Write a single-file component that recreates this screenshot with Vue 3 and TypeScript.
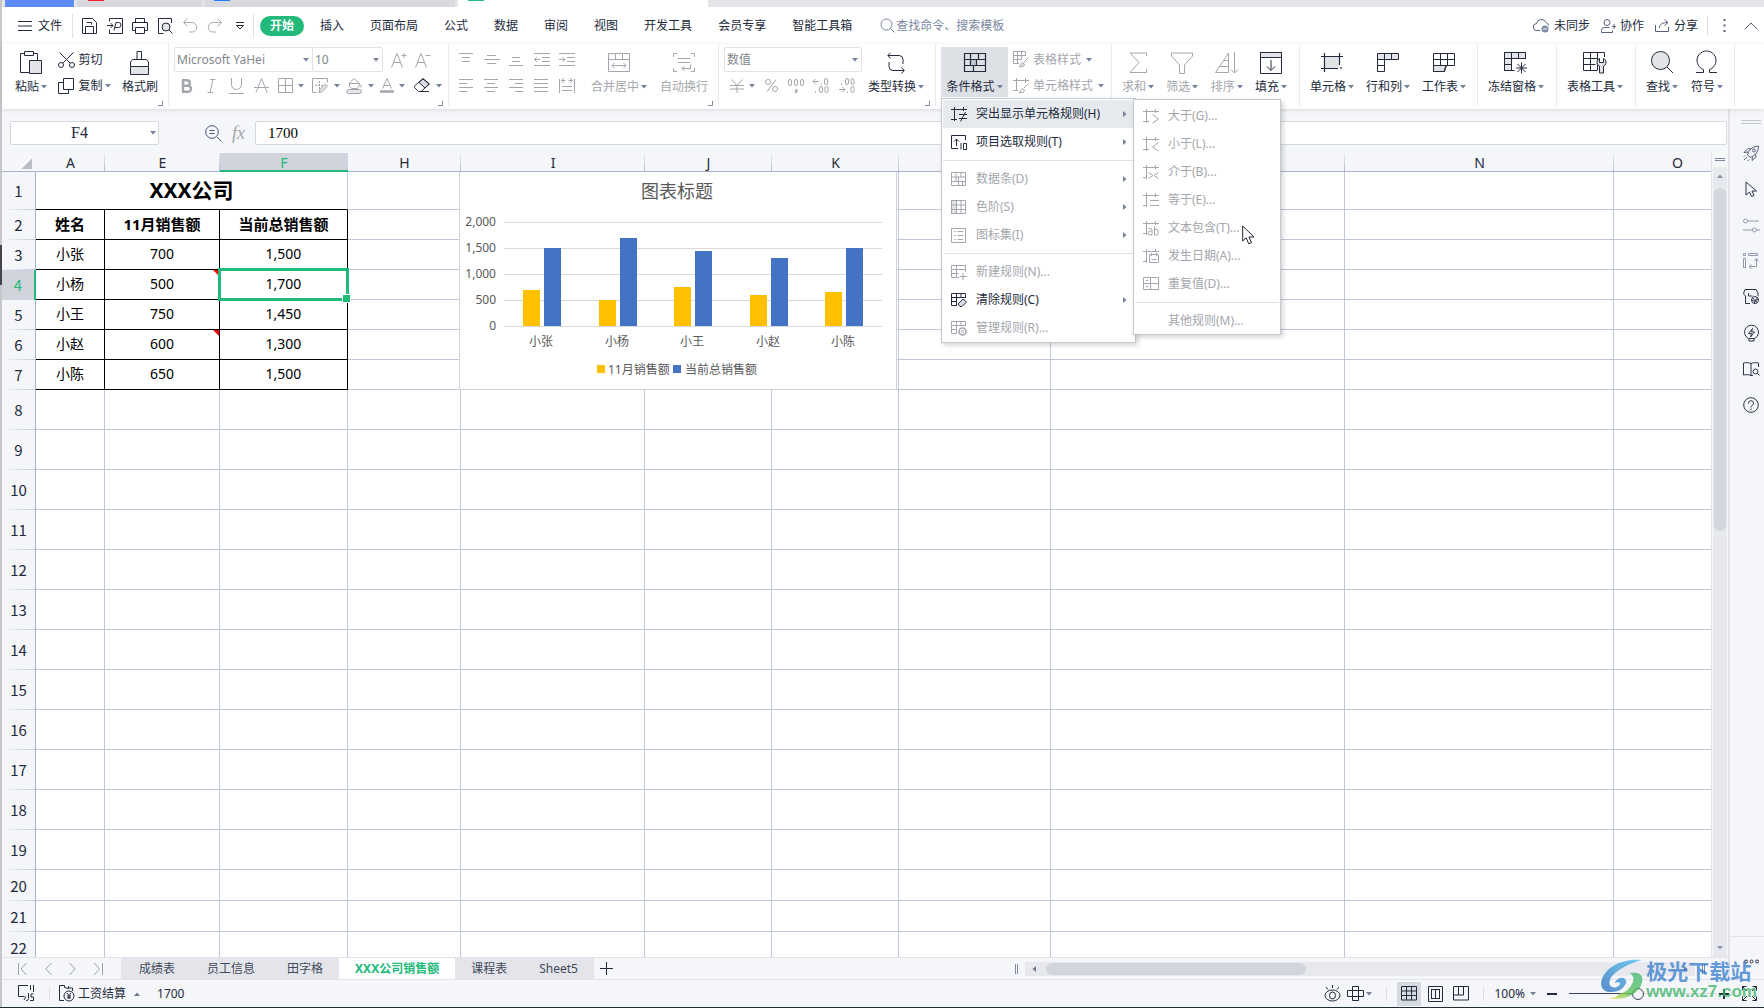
<script setup lang="ts">
import { h, ref } from 'vue'

type Glyph = [number, number, string]

const soft = 'fill="#e2e4e8"'

const glyphs: Record<string, Glyph> = {
  menu: [14, 10, '<path d="M0 .5h14M0 5h14M0 9.5h14"/>'],
  save: [15, 16, '<path d="M.5 .5h10l4 4v11h-14zM3.500 15V8.500h8V15M4.500 4.500h5v2"/>'],
  export: [16, 16, '<path d="M2.500 3.500V.5h13v15h-13v-4M0 7.500h6M3.500 5l2.500 2.500L3.500 10M7 12.500l2-8h2.500a2 2 0 0 1 0 5H8"/>'],
  print: [16, 16, '<path d="M3.500 4V.5h9V4M3.500 12.500h-3v-8h15v8h-3M3.500 9.500h9v6h-9z"/>'],
  preview: [16, 16, '<path d="M14.500 5V.5H1.500v15h5"/><circle cx="9" cy="9" r="4" fill="#dfe2e7"/><path d="M12 12l3.500 3.500"/>'],
  undo: [14, 15, '<path d="M4.500 .5L.5 4.500l4 4M.5 4.500H9a4.500 4.500 0 0 1 0 9.500H6"/>'],
  redo: [14, 15, '<path d="M9.500 .5l4 4-4 4M13.500 4.500H5A4.500 4.500 0 0 0 5 14h3"/>'],
  more: [8, 8, '<path d="M0 .5h8M.5 3.500L4 7l3.500-3.500z"/>'],
  search: [15, 15, '<circle cx="6.500" cy="6.500" r="5.500"/><path d="M10.500 10.500l4 4"/>'],
  cloud: [17, 15, '<path d="M7 12.500H4a3.500 3.500 0 0 1-.5-7 5 5 0 0 1 9.500-1 4 4 0 0 1 2.500 3"/><circle cx="12" cy="11" r="3.500" fill="#7c89a8" stroke="none"/><path d="M10 11h4" stroke="#fff"/>'],
  person: [15, 14, '<circle cx="6" cy="3.500" r="3"/><path d="M8.500 8.500h-5a3 3 0 0 0-3 3v2h11v-2M11 7.500h4M13 5v5"/>'],
  share: [15, 13, '<path d="M.5 6v6.500h13V8M4.500 9c0-4 3-5.500 8-5.500M9.500 .5l3.500 3-3.500 3"/>'],
  dots: [3, 13, '<path d="M1.500 0v2M1.500 5.500v2M1.500 11v2" stroke-width="2"/>'],
  up: [14, 8, '<path d="M.5 7.500L7 1l6.500 6.500"/>'],
  paste: [22, 24, `<path d="M9 21.500H.5v-19h4M13.500 2.500h4V9M4.500 .5h9v4h-9z"/><path d="M9.500 9.500h12v13h-12z" ${soft}/>`],
  cut: [17, 16, '<circle cx="3" cy="13" r="2.500"/><circle cx="14" cy="13" r="2.500"/><path d="M1.500 .5L12 11M15.500 .5L5 11"/>'],
  copy: [16, 16, '<path d="M5.500 4.500h-5v11h10v-4M5.500 .5h10v11h-10z"/>'],
  brush: [19, 24, `<path d="M7 8.500V.5h4.500v8M.5 15v-4l2-2.500h14l2 2.500v4"/><path d="M.5 15.500h18v8H.5z" ${soft}/>`],
  grow: [16, 16, '<path d="M.5 15.500L6 1.500l5.500 14M2.500 10.500h7M10.500 3.500h5M13 1v5"/>'],
  shrink: [16, 16, '<path d="M.5 15.500L6 1.500l5.500 14M2.500 10.500h7M10.500 3.500h5"/>'],
  bold: [12, 14, '<path d="M2 1v12M1 1.200h5a2.800 2.800 0 0 1 0 5.600H2M5.500 6.800H7a3 3 0 0 1 0 6H1" stroke-width="2.400"/>'],
  italic: [9, 14, '<path d="M3 .5h5.500M.5 13.500H6M5.800 .5l-2.600 13"/>'],
  underline: [15, 16, '<path d="M2.500 0v6.500a5 5 0 0 0 10 0V0M0 15.500h15"/>'],
  strike: [15, 15, '<path d="M2 14.500L7.500 .5l5.500 14M0 9.500h15"/>'],
  borders: [15, 15, '<path d="M.5 .5h14v14H.5zM7.500 .5v14M.5 7.500h14"/>'],
  penborder: [17, 16, '<path d="M15.500 4.500V.5H.5v14h4"/><path d="M7.500 3v8M3 7.500h9" stroke-dasharray="2 1"/><path d="M7 14.500l.8-3L13.500 6l2 2L10 13.700z" fill="#e2e4e8"/>'],
  bucket: [17, 16, `<path d="M3.500 5L8 .5l6 5.500-2.500 4.500h-6L3.500 8zM3.500 5.500h10M15 7v2.500"/><rect x=".5" y="11.500" width="15" height="4" rx="2" ${soft}/>`],
  fontcolor: [14, 15, '<path d="M2.500 10.500l4.500-10 4.500 10M4 7.500h6"/><path d="M0 13.500h14" stroke-width="2.500"/>'],
  eraser: [17, 15, '<path d="M.5 8L9 .5 15.500 6 7 13.500H4.500L.5 9.500z"/><path d="M5 4.500L9 1l6 5-4 4z" fill="#d9dce2"/><path d="M7 13.500h8"/>'],
  vtop: [14, 14, '<path d="M0 .5h14M3 4.500h8M3 8.500h8"/>'],
  vmid: [16, 14, '<path d="M3 2.500h9M0 6.500h16M3 10.500h9"/>'],
  vbot: [14, 14, '<path d="M3 4.500h8M3 8.500h8M0 12.500h14"/>'],
  outdent: [16, 14, '<path d="M0 .5h16M8 4.500h8M8 8.500h8M0 12.500h16M0 6.500h6M3 4L.5 6.500 3 9"/>'],
  indent: [16, 14, '<path d="M0 .5h16M8 4.500h8M8 8.500h8M0 12.500h16M0 6.500h6M3.500 4L6 6.500 3.500 9"/>'],
  hleft: [14, 14, '<path d="M0 .5h14M0 4.500h8M0 8.500h14M0 12.500h8"/>'],
  hcenter: [14, 14, '<path d="M0 .5h14M3 4.500h8M0 8.500h14M3 12.500h8"/>'],
  hright: [14, 14, '<path d="M0 .5h14M6 4.500h8M0 8.500h14M6 12.500h8"/>'],
  justify: [14, 14, '<path d="M0 .5h14M0 4.500h14M0 8.500h14M0 12.500h14"/>'],
  distribute: [16, 15, '<path d="M.5 1v14M15.500 1v14M3 8.500h10M3 12.500h10M2.500 2.500h4M2.500 2.500L5 0M2.500 2.500L5 5M13.500 2.500h-4M13.500 2.500L11 0M13.500 2.500L11 5"/>'],
  merge: [22, 20, '<path d="M.5 .5h21v18H.5zM.5 6.500h21M7.500 .5v6M14.500 .5v6M4 12.500h14M6.500 10L4 12.500 6.500 15M15.500 10l2.500 2.500-2.500 2.500"/>'],
  wrap: [22, 20, '<path d="M.5 4V.5H4M18 .5h3.500V4M21.500 15v3.500H18M4 18.500H.5V15M5 5.500h12M5 9.500h12M17.500 11.500v4H9M11.500 13L9 15.500l2.500 2.500"/>'],
  yen: [14, 14, '<path d="M1.500 .5L7 6.500l5.500-6M7 6.500V14M0 6.500h14M0 10h14"/>'],
  percent: [13, 13, '<circle cx="3" cy="3" r="2.500"/><circle cx="10" cy="10" r="2.500"/><path d="M11 .5l-9 12"/>'],
  thousands: [16, 14, '<rect x=".5" y=".5" width="3" height="6" rx="1.500"/><rect x="6.500" y=".5" width="3" height="6" rx="1.500"/><rect x="12.500" y=".5" width="3" height="6" rx="1.500"/><path d="M8.500 10v2l-1 2" stroke-width="2"/>'],
  decinc: [16, 15, '<path d="M0 3.500h6M2.500 1L0 3.500 2.500 6M8.500 5.500v1.500M2.500 13.500V15"/><rect x="11.500" y=".5" width="3" height="6" rx="1.500"/><rect x="6.500" y="8.500" width="3" height="6" rx="1.500"/><rect x="12" y="8.500" width="3" height="6" rx="1.500"/>'],
  decdec: [16, 15, '<path d="M0 11.500h6M3.500 9L6 11.500 3.500 14M8.500 13.500V15M2.500 5.500v1.500"/><rect x="6.500" y=".5" width="3" height="6" rx="1.500"/><rect x="12" y=".5" width="3" height="6" rx="1.500"/><rect x="12" y="8.500" width="3" height="6" rx="1.500"/>'],
  convert: [18, 22, '<path d="M3.500 1L.8 3.500 3.500 6.500M.8 3.500H12a4 4 0 0 1 4 4V12M14.500 15.500l2.700 3-2.700 3M17.200 18.500H6a4 4 0 0 1-4-4V10"/>'],
  condfmt: [22, 20, '<path d="M6.500 6.500h6v6h-6z" fill="#c3c9d2"/><path d="M.5 .5h21v18H.5zM.5 6.500h21M.5 12.500h21M6.500 .5v12M14.500 .5v6M12.500 6.500v6M9.500 12.500v6" stroke-width="1.200"/>'],
  tablestyle: [17, 17, `<path d="M12.500 5V.5H.5v12H6M.5 4.500h12M.5 8.500h8M4.500 .5v12M8.500 .5v8"/><path d="M15.500 6.500L11 11M9 11.500c-1.500 1-.5 3-3 4 3 1 5.500-.5 5.500-2.500z" ${soft}/>`],
  cellstyle: [17, 16, '<path d="M3.500 0v12M0 2.500h16M12.500 0v5M0 12.500h5"/><path d="M15.500 5.500L11 10M9 10.500c-1.500 1-.5 3-3 4 3 1 5.500-.5 5.500-2.500z"/>'],
  sum: [18, 22, '<path d="M17.500 4V1H1l9 9.500L1 20.500h16.500V17"/>'],
  filter: [22, 22, '<path d="M.5 1h21v3L13.500 13v8.500h-5V13L.5 4z"/>'],
  sort: [24, 22, '<path d="M.5 20.500L13.500 1v19.500zM5 14.500h8.500M9 8.500h4.500M19.500 0v21M16 17.500l3.500 3.500 3.500-3.500"/>'],
  fill: [22, 22, `<path d="M.5 .5h21v5H.5z" ${soft}/><path d="M.5 .5h21v21H.5zM11 8v10M7 14.500l4 4 4-4"/>`],
  cells: [22, 20, `<path d="M3.500 3.500h15v12h-15z" ${soft} stroke="none"/><path d="M3.500 0v19M0 3.500h22M18.500 0v12M0 15.500h17M20 14v2" stroke-width="1.200"/>`],
  rowcol: [22, 20, `<path d="M.5 .5h21v6H.5z" ${soft}/><path d="M7.500 .5v18h-7V.5M14.500 .5v6M.5 6.500h7M.5 12.500h7"/>`],
  worksheet: [22, 20, `<path d="M.5 12.500h13l-2 6H.5z" ${soft}/><path d="M.5 18.500V.5h21v12H.5M.5 6.500h21M7.500 .5v12M14.500 .5v12M.5 18.500h10.500l2-6"/>`],
  freeze: [24, 22, `<path d="M.5 .5h21v6h-14v12h-7z" ${soft}/><path d="M21.500 7V.5H.5v18h10M7.500 .5v18M14.500 .5v6M.5 6.500h21M.5 12.500h7M17.500 10.500v11M12 16h11M13.500 12l8 8M21.500 12l-8 8"/>`],
  tabletool: [24, 22, `<path d="M21.500 5V.5H.5v18H14M7.500 .5v18M14.500 .5v18M.5 6.500h14M.5 12.500h12"/><path d="M16.500 6.500v4h4v-4a4 4 0 0 1 0 7.500v7h-4v-7a4 4 0 0 1 0-7.500z" ${soft}/>`],
  find: [23, 23, `<circle cx="9.500" cy="9.500" r="9" ${soft}/><path d="M16 16l6 6"/>`],
  omega: [21, 22, '<path d="M0 20.500h7.500v-3a9.500 9.500 0 1 1 6 0v3H21"/>'],
  corner: [5, 5, '<path d="M4.500 0v4.500H0"/>'],
  caret: [6, 4, '<path d="M0 0h6L3 3.500z" fill="currentColor" stroke="none"/>'],
  caretup: [6, 4, '<path d="M0 4h6L3 .5z" fill="currentColor" stroke="none"/>'],
  caretright: [4, 6, '<path d="M0 0v6l3.500-3z" fill="currentColor" stroke="none"/>'],
  caretleft: [4, 6, '<path d="M4 0v6L.5 3z" fill="currentColor" stroke="none"/>'],
  mnot: [16, 15, '<path d="M3.500 0v14M0 2.500h16M12.500 0v4M0 12.500h6M8 7.500h8M8 11.500h8M14.500 5L9.500 14.500"/>'],
  mtop: [16, 15, '<path d="M14.500 5V.5H.5v13H7M5.500 11V4M3 6.500L5.500 4 8 6.500M10 8v6.500M12.500 8.500h3v6h-3z"/>'],
  mbars: [16, 15, `<path d="M.5 .5h14v13H.5zM.5 5h14M.5 9.500h14M5 .5v9M10 .5v4.500M7.500 5v8.500M11.500 9.500v4"/>`],
  mscale: [16, 15, `<path d="M.5 .5h5v13h-5z" ${soft}/><path d="M.5 .5h14v13H.5zM.5 5h14M.5 9.500h14M5.500 .5v13M10 .5v13"/>`],
  micons: [16, 15, '<path d="M.5 .5h14v14H.5zM6.500 3.500H12M6.500 7.500H12M6.500 11.500H12M3 3.500h1.500M3 7.500h1.500M3 11.500h1.500"/>'],
  mnew: [16, 15, '<path d="M14.500 7V.5H.5v12H8M.5 4.500h14M.5 8.500h7M5.500 .5v12M12 8v7M8.500 11.500H16"/>'],
  mclear: [16, 15, '<path d="M14.500 5V.5H.5v12H6M.5 4.500h14M.5 8.500H6M5.500 .5v12M10 .5v4"/><path d="M7 11l5-5 3.500 3-4.500 4.500H9z" fill="#d9dce2"/>'],
  mmanage: [16, 15, '<path d="M14.500 5V.5H.5v12H6M.5 4.500h14M.5 8.500H6M5.500 .5v12M10 .5v4"/><circle cx="11.500" cy="10.500" r="3.500" stroke-width="1.600"/><circle cx="11.500" cy="10.500" r="1"/>'],
  gt: [16, 15, '<path d="M3.500 0v14M0 2.500h16M12.500 0v4M0 12.500h6M9.500 5.500l6 4.500-6 4"/>'],
  lt: [16, 15, '<path d="M3.500 0v14M0 2.500h16M12.500 0v4M0 12.500h6M15.500 5.500l-6 4.500 6 4"/>'],
  between: [16, 15, '<path d="M3.500 0v14M0 2.500h16M12.500 0v4M0 12.500h4M5.500 7.500l4.500 3-4.500 3M15.500 7.500l-4.500 3 4.500 3"/>'],
  eq: [16, 15, '<path d="M3.500 0v14M0 2.500h16M12.500 0v4M0 12.500h4M7 7.500h9M7 12.500h9"/>'],
  has: [16, 15, '<path d="M3.500 0v14M0 2.500h16M12.500 0v4M0 12.500h4M5.500 7.500h2a1.500 1.500 0 0 1 1.500 1.500v5M9 10H7a2 2 0 0 0 0 4h2M11.500 5v9h2.500a1 1 0 0 0 1-1v-3.500a1 1 0 0 0-1-1h-2.500"/>'],
  date: [16, 15, '<path d="M3.500 0v14M0 2.500h16M12.500 0v3M0 12.500h4M6.500 5.500h9v8h-9zM8.500 4v3M13.500 4v3M8.500 10.500h5"/>'],
  dup: [16, 14, '<path d="M.5 .5h15v12H.5zM.5 6.500h15M7.500 .5v12M3 3.500h2M3 9.500h2"/>'],
  pointer: [13, 20, '<path d="M.7 1v15l3.500-3.200 2.500 6 2.800-1.200-2.600-5.600H12z" fill="#fff"/>'],
  zoomout: [17, 17, '<circle cx="7" cy="7" r="6.300"/><path d="M12 12l4.500 4.500M4.500 5.500h5M4.500 8.500h5"/>'],
  rocket: [17, 17, '<path d="M4.500 10C5.500 5 9 1.500 15.500 1c0 6.500-4 10-8.500 11.500zM5.500 7L1 7.500l4-4 3 .5M9.500 11.500L9 15.500l4-3.500-.5-3M4 12l-3 3M2 10.500l-1 1M6 14.500l-1.500 1.500"/><circle cx="11" cy="5.500" r="1.500"/>'],
  arrow: [13, 17, '<path d="M1 1v13l3.500-3 2 4.500L9 14.500l-2-4.500h4.500z"/>'],
  sliders: [17, 15, '<circle cx="2.500" cy="3" r="2"/><circle cx="11.500" cy="12" r="2"/><path d="M4.500 3H16M0 12h9.500M13.500 12H17"/>'],
  layout: [16, 16, '<path d="M.5 .5h2v2h-2zM5.500 .5h9v2h-9zM.5 5.500h2v9h-2zM13.500 6v7.500H6.500M11.500 8l2-2.500 2 2.500M8.500 11.500l-2.500 2 2.500 2"/>'],
  store: [17, 16, '<path d="M7 14.500H2.500V7M2.500 6.500c-2 0-2-2-1.500-3.500L2 .5h11L15 4v3M5.500 4v3h4"/><circle cx="12" cy="11" r="3.500"/><path d="M8.500 11c2.500 2 5 0 7-1M11.500 14.500c0-3 2-5 3-6M9.500 8.500c1 2 3 4 4.500 4.500"/>'],
  bulb: [15, 17, '<path d="M5 13.500v2.500h5v-2.500M4.500 13.500a7 7 0 1 1 6 0zM8.500 3.500L4.500 8.500h3l-1 3.500 4-5h-3z"/>'],
  book: [17, 15, '<path d="M8 13.500c-2-1-5-1-7.500-.5V1C3 .5 6 .5 8 1.500 10 .5 13 .5 15.500 1v4M8 1.500v12h2M8 13.500"/><circle cx="12.500" cy="9.500" r="2.500"/><path d="M14.500 11.500l2 2"/>'],
  help: [16, 16, '<circle cx="8" cy="8" r="7.300"/><path d="M5.500 6.500a2.500 2.500 0 1 1 3.500 2c-.8.400-1 .8-1 2M8 11.500V13"/>'],
  first: [10, 12, '<path d="M.5 0v12M8.500 0L3 6l5.500 6"/>'],
  prev: [7, 12, '<path d="M6.500 0L.8 6l5.700 6"/>'],
  next: [7, 12, '<path d="M.5 0l5.700 6L.5 12"/>'],
  last: [10, 12, '<path d="M9.500 0v12M1 0l5.500 6L1 12"/>'],
  plus: [13, 13, '<path d="M6.500 0v13M0 6.500h13"/>'],
  script: [17, 17, '<path d="M10 .5H.5v11h6M12.500 0v5M15.500 7V0M6 15l2-3.500M10.500 8v5.500c0 1.500-1 2-2.500 2M15.500 9H13v3h2.500v3.500H12"/>'],
  payroll: [16, 17, '<path d="M5 15.500H.5V.5h5M10 3h3.500V6M5.500 .5v2l4 1V1"/><circle cx="10" cy="11" r="5"/><path d="M8 8l2 2.500L12 8M10 10.500V14M8 11h4M8 12.800h4"/>'],
  eye: [17, 17, '<ellipse cx="8.500" cy="10.500" rx="7.500" ry="5.500"/><ellipse cx="8.500" cy="10.500" rx="3" ry="3.500"/><path d="M8.500 0v3M2 2l2 2.500M15 2l-2 2.500"/>'],
  cross: [17, 15, '<path d="M5.500 .5h6v14h-6zM.5 4.500h16v6H.5z"/>'],
  gridview: [16, 15, '<path d="M.5 .5h15v13.500H.5zM.5 5h15M.5 9.500h15M5.500 .5V14M10.500 .5V14"/>'],
  pageview: [15, 16, '<path d="M.5 .5h14v15H.5zM3.500 3v10M7.500 3v10M11.500 3v10M3.500 3.500h8M3.500 12.500h8"/>'],
  breakview: [16, 15, '<path d="M.5 .5h15v13.500H.5zM.5 9h10V.5M5.500 .5V9"/>'],
  minus: [10, 10, '<path d="M0 5h10" stroke-width="2"/>'],
  add: [10, 10, '<path d="M0 5h10M5 0v10" stroke-width="2"/>'],
  full: [15, 15, '<path d="M.5 4.500v-4h4M10.500 .5h4v4M14.500 10.500v4h-4M4.500 14.500h-4v-4M.5 .5l4.500 4.500M14.500 .5L10 5M14.500 14.500L10 10M.5 14.500L5 10"/>'],
  ellipsis: [15, 5, '<circle cx="2" cy="2.500" r="1.500"/><circle cx="7.500" cy="2.500" r="1.500"/><circle cx="13" cy="2.500" r="1.500"/>'],
}

const Icon = (props: { n: string }) => {
  const [w, hgt, body] = glyphs[props.n]
  return h('svg', {
    width: w,
    height: hgt,
    viewBox: `0 0 ${w} ${hgt}`,
    fill: 'none',
    stroke: 'currentColor',
    'aria-hidden': 'true',
    style: 'display:block;flex:none;overflow:visible',
    innerHTML: body,
  })
}
Icon.props = ['n']

const quickIcons = ['save', 'export', 'print', 'preview', 'undo', 'redo']
const menuTabs = ['插入', '页面布局', '公式', '数据', '审阅', '视图', '开发工具', '会员专享', '智能工具箱']

const letterTools = ['bold', 'italic', 'underline', 'strike']
const paintTools = ['borders', 'penborder', 'bucket', 'fontcolor', 'eraser']
const alignTools = ['vtop', 'vmid', 'vbot', 'outdent', 'indent', 'hleft', 'hcenter', 'hright', 'justify', 'distribute']
const numTools = ['percent', 'thousands', 'decinc', 'decdec']

const bigGroups = [
  { name: 'edit', items: [['sum', '求和', 1], ['filter', '筛选', 1], ['sort', '排序', 1], ['fill', '填充', 0]] },
  { name: 'cells', items: [['cells', '单元格', 0], ['rowcol', '行和列', 0], ['worksheet', '工作表', 0]] },
  { name: 'freeze', items: [['freeze', '冻结窗格', 0]] },
  { name: 'tools', items: [['tabletool', '表格工具', 0]] },
  { name: 'find', items: [['find', '查找', 0], ['omega', '符号', 0]] },
] as { name: string; items: [string, string, number][] }[]

interface Item { icon?: string; text?: string; off?: boolean; sub?: boolean; line?: boolean }
const ruleMenu: Item[] = [
  { icon: 'mnot', text: '突出显示单元格规则(H)', sub: true },
  { icon: 'mtop', text: '项目选取规则(T)', sub: true },
  { line: true },
  { icon: 'mbars', text: '数据条(D)', off: true, sub: true },
  { icon: 'mscale', text: '色阶(S)', off: true, sub: true },
  { icon: 'micons', text: '图标集(I)', off: true, sub: true },
  { line: true },
  { icon: 'mnew', text: '新建规则(N)...', off: true },
  { icon: 'mclear', text: '清除规则(C)', sub: true },
  { icon: 'mmanage', text: '管理规则(R)...', off: true },
]
const highlightMenu: Item[] = [
  { icon: 'gt', text: '大于(G)...' },
  { icon: 'lt', text: '小于(L)...' },
  { icon: 'between', text: '介于(B)...' },
  { icon: 'eq', text: '等于(E)...' },
  { icon: 'has', text: '文本包含(T)...' },
  { icon: 'date', text: '发生日期(A)...' },
  { icon: 'dup', text: '重复值(D)...' },
  { line: true },
  { text: '其他规则(M)...' },
]

const columns = ['A', 'E', 'F', 'H', 'I', 'J', 'K', 'L', 'M', 'N', 'O']
const people = [
  { name: '小张', month: 700, total: 1500 },
  { name: '小杨', month: 500, total: 1700, note: true },
  { name: '小王', month: 750, total: 1450 },
  { name: '小赵', month: 600, total: 1300, note: true },
  { name: '小陈', month: 650, total: 1500 },
]
const fmt = (n: number) => n.toLocaleString('en-US')
const emptyRows = Array.from({ length: 15 }, (_, i) => i + 8)

const plotBase = 154
const unit = 0.052
const barX = (i: number) => Math.round(64 + i * 75.5)
const ticks = [0, 500, 1000, 1500, 2000]
const tickY = (v: number) => Math.round(plotBase - v * unit)

const sheets = ['成绩表', '员工信息', '田字格', 'XXX公司销售额', '课程表', 'Sheet5']
const activeSheet = ref(3)
const cellRef = ref('F4')
const formula = ref('1700')
const zoom = ref(46)
const sideIcons = ['rocket', 'arrow', 'sliders', 'layout', 'store', 'bulb', 'book', 'help']
</script>

<template>
  <div class="app">
    <div class="doctabs">
      <span class="home"></span>
      <span class="doc d1"><i class="red"></i></span>
      <span class="doc d2"><i class="blue"></i></span>
      <span class="doc cur"><i class="green"></i></span>
    </div>

    <header class="menubar">
      <button class="file"><Icon n="menu" />文件</button>
      <div class="quick">
        <button v-for="q in quickIcons" :key="q" :class="['q', { off: q === 'undo' || q === 'redo' }]" :aria-label="q"><Icon :n="q" /></button>
        <button class="q qmore" aria-label="more"><Icon n="more" /></button>
      </div>
      <nav class="tabs">
        <button class="start">开始</button>
        <button v-for="t in menuTabs" :key="t" class="mtab">{{ t }}</button>
      </nav>
      <label class="find"><Icon n="search" /><input type="text" placeholder="查找命令、搜索模板" /></label>
      <div class="account">
        <button><Icon n="cloud" />未同步</button>
        <button><Icon n="person" />协作</button>
        <button><Icon n="share" />分享</button>
        <span class="vline"></span>
        <button class="dots" aria-label="options"><Icon n="dots" /></button>
        <button aria-label="collapse"><Icon n="up" /></button>
      </div>
    </header>

    <section class="ribbon">
      <div class="group g-clip">
        <button class="big"><span class="pic"><Icon n="paste" /></span><span class="lab">粘贴<Icon n="caret" class="car" /></span></button>
        <div class="stack">
          <button class="small"><span class="sp"><Icon n="cut" /></span>剪切</button>
          <button class="small"><span class="sp"><Icon n="copy" /></span>复制<Icon n="caret" class="car" /></button>
        </div>
        <button class="big"><span class="pic"><Icon n="brush" /></span><span class="lab">格式刷</span></button>
        <Icon n="corner" class="corner" />
      </div>

      <div class="group g-font">
        <div class="stack">
          <div class="line">
            <span class="combo fam"><select aria-label="字体"><option>Microsoft YaHei</option></select><Icon n="caret" class="car" /></span>
            <span class="combo size"><select aria-label="字号"><option>10</option></select><Icon n="caret" class="car" /></span>
            <button class="tool off grow" aria-label="grow"><Icon n="grow" /></button>
            <button class="tool off" aria-label="shrink"><Icon n="shrink" /></button>
          </div>
          <div class="line">
            <button v-for="s in letterTools" :key="s" class="tool letter off" :aria-label="s"><Icon :n="s" /></button>
            <span class="paints">
              <button v-for="s in paintTools" :key="s" :class="['tool', { off: s !== 'eraser' }]" :aria-label="s"><Icon :n="s" /><Icon n="caret" class="car wide" /></button>
            </span>
          </div>
        </div>
        <Icon n="corner" class="corner" />
      </div>

      <div class="group g-align">
        <div class="aligns">
          <button v-for="a in alignTools" :key="a" class="tool off" :aria-label="a"><Icon :n="a" /></button>
        </div>
        <button class="big off"><span class="pic"><Icon n="merge" /></span><span class="lab">合并居中<Icon n="caret" class="car" /></span></button>
        <button class="big off"><span class="pic"><Icon n="wrap" /></span><span class="lab">自动换行</span></button>
        <Icon n="corner" class="corner" />
      </div>

      <div class="group g-num">
        <div class="stack">
          <div class="line">
            <span class="combo num"><select aria-label="数字格式"><option>数值</option></select><Icon n="caret" class="car" /></span>
          </div>
          <div class="line nums">
            <button class="tool off" aria-label="currency"><Icon n="yen" /><Icon n="caret" class="car wide" /></button>
            <button v-for="n in numTools" :key="n" class="tool off" :aria-label="n"><Icon :n="n" /></button>
          </div>
        </div>
        <button class="big"><span class="pic"><Icon n="convert" /></span><span class="lab">类型转换<Icon n="caret" class="car" /></span></button>
        <Icon n="corner" class="corner" />
      </div>

      <div class="group g-style">
        <div class="cond">
          <button class="big open"><span class="pic"><Icon n="condfmt" /></span><span class="lab">条件格式<Icon n="caret" class="car" /></span></button>
          <ul class="popup rules">
            <template v-for="(m, i) in ruleMenu" :key="i">
              <li v-if="m.line" class="rule"></li>
              <li v-else :class="['entry', { off: m.off, hot: i === 0 }]">
                <button :disabled="m.off"><span class="mi"><Icon :n="m.icon!" /></span>{{ m.text }}<Icon v-if="m.sub" n="caretright" class="arr" /></button>
              </li>
            </template>
          </ul>
          <ul class="popup highlight">
            <template v-for="(m, i) in highlightMenu" :key="i">
              <li v-if="m.line" class="rule"></li>
              <li v-else class="entry off">
                <button disabled><span class="mi"><Icon v-if="m.icon" :n="m.icon" /></span>{{ m.text }}</button>
              </li>
            </template>
            <li class="mouse"><Icon n="pointer" /></li>
          </ul>
        </div>
        <div class="stack styl">
          <button class="small off"><span class="sp"><Icon n="tablestyle" /></span>表格样式<Icon n="caret" class="car far" /></button>
          <button class="small off"><span class="sp"><Icon n="cellstyle" /></span>单元格样式<Icon n="caret" class="car far" /></button>
        </div>
      </div>

      <div v-for="g in bigGroups" :key="g.name" :class="['group', 'g-' + g.name]">
        <button v-for="b in g.items" :key="b[1]" :class="['big', { off: b[2] }]"><span class="pic"><Icon :n="b[0]" /></span><span class="lab">{{ b[1] }}<Icon n="caret" class="car" /></span></button>
      </div>
    </section>

    <div class="work">
      <main class="book">
        <div class="fbar">
          <span class="namebox"><input v-model="cellRef" type="text" aria-label="名称框" /><Icon n="caret" class="car" /></span>
          <button class="lens" aria-label="zoom"><Icon n="zoomout" /></button>
          <span class="fx">fx</span>
          <input v-model="formula" class="formula" type="text" aria-label="编辑栏" />
        </div>

        <div class="sheet">
          <div class="grid">
            <table>
              <colgroup>
                <col class="c-row" />
                <col v-for="c in columns" :key="c" :class="'c-' + c" />
              </colgroup>
              <thead>
                <tr>
                  <th class="all"></th>
                  <th v-for="c in columns" :key="c" :class="{ sel: c === 'F', gap: c === 'A' }">{{ c === 'L' || c === 'M' ? '' : c }}</th>
                </tr>
              </thead>
              <tbody>
                <tr class="r1">
                  <th>1</th>
                  <td colspan="3" class="title">XXX公司</td>
                  <td v-for="c in 8" :key="c"></td>
                </tr>
                <tr class="rd head">
                  <th>2</th>
                  <td class="bk">姓名</td><td class="bk">11月销售额</td><td class="bk">当前总销售额</td>
                  <td v-for="c in 8" :key="c"></td>
                </tr>
                <tr v-for="(p, i) in people" :key="p.name" class="rd">
                  <th :class="{ sel: i === 1 }">{{ i + 3 }}</th>
                  <td class="bk">{{ p.name }}</td>
                  <td class="bk">{{ p.month }}<i v-if="p.note" class="note"></i></td>
                  <td class="bk">{{ fmt(p.total) }}<i v-if="i === 1" class="cursor"></i></td>
                  <td v-for="c in 8" :key="c"></td>
                </tr>
                <tr v-for="r in emptyRows" :key="r" :class="r < 20 ? 'rt' : 'rs'">
                  <th>{{ r }}</th>
                  <td v-for="c in 11" :key="c"></td>
                </tr>
              </tbody>
            </table>

            <svg class="chart" width="438" height="218" viewBox="0 0 438 218">
              <rect x=".5" y="-1" width="437" height="218.500" fill="#fff" stroke="#cfd2d8" />
              <text x="218" y="26" class="ct" text-anchor="middle">图表标题</text>
              <g v-for="t in ticks" :key="t">
                <path :d="`M45 ${tickY(t) + .5}H423`" stroke="#d9d9d9" />
                <text x="37" :y="tickY(t) + 4" class="cl" text-anchor="end">{{ fmt(t) }}</text>
              </g>
              <g v-for="(p, i) in people" :key="p.name">
                <rect :x="barX(i)" :y="tickY(p.month)" width="17" :height="plotBase - tickY(p.month)" fill="#ffc000" />
                <rect :x="barX(i) + 21" :y="tickY(p.total)" width="17" :height="plotBase - tickY(p.total)" fill="#4472c4" />
                <text :x="barX(i) + 18" y="174" class="cl" text-anchor="middle">{{ p.name }}</text>
              </g>
              <rect x="138" y="193" width="8" height="8" fill="#ffc000" />
              <text x="149" y="202" class="cl">11月销售额</text>
              <rect x="214" y="193" width="8" height="8" fill="#4472c4" />
              <text x="226" y="202" class="cl">当前总销售额</text>
            </svg>
          </div>
          <div class="vscroll">
            <span class="split"></span>
            <div class="vtrack"><Icon n="caretup" /><span class="vthumb"></span><Icon n="caret" class="end" /></div>
          </div>
        </div>

        <div class="tabrow">
          <div class="navs">
            <button v-for="n in ['first', 'prev', 'next', 'last']" :key="n" :aria-label="n"><Icon :n="n" /></button>
          </div>
          <button v-for="(s, i) in sheets" :key="s" :class="['stab', { on: i === activeSheet }]" @click="activeSheet = i">{{ s }}</button>
          <button class="newtab" aria-label="new"><Icon n="plus" /></button>
          <div class="hscroll">
            <span class="hsplit"></span>
            <div class="htrack"><Icon n="caretleft" /><span class="hthumb"></span><Icon n="caretright" class="end" /></div>
            <span class="hsplit"></span>
          </div>
        </div>
      </main>

      <aside class="side">
        <span class="grip"></span>
        <button v-for="s in sideIcons" :key="s" :class="{ dim: s === 'sliders' || s === 'layout', mid: s === 'rocket' }" :aria-label="s"><Icon :n="s" /></button>
        <button class="dotsbtn" aria-label="more"><Icon n="ellipsis" /></button>
      </aside>
    </div>

    <footer class="status">
      <button class="js" aria-label="script"><Icon n="script" /></button>
      <span class="vline"></span>
      <button class="pay"><Icon n="payroll" />工资结算<Icon n="caretup" class="pc" /></button>
      <span class="sum">1700</span>
      <div class="views">
        <button aria-label="eye"><Icon n="eye" /></button>
        <button class="crossb" aria-label="cross"><Icon n="cross" /><Icon n="caret" class="car" /></button>
        <span class="vline"></span>
        <button class="vb on" aria-label="normal"><Icon n="gridview" /></button>
        <button class="vb" aria-label="page"><Icon n="pageview" /></button>
        <button class="vb" aria-label="break"><Icon n="breakview" /></button>
        <span class="vline"></span>
        <button class="pct">100%<Icon n="caret" class="car far" /></button>
        <button class="minus" aria-label="minus"><Icon n="minus" /></button>
        <input v-model="zoom" type="range" min="0" max="100" aria-label="缩放" />
        <button aria-label="add"><Icon n="add" /></button>
        <button class="full" aria-label="full"><Icon n="full" /></button>
      </div>
    </footer>

    <div class="mark">
      <svg width="42" height="42" viewBox="0 0 42 42">
        <defs>
          <linearGradient id="ma" x1="1" y1="0" x2="0" y2="1"><stop offset="0" stop-color="#4fc4ee" /><stop offset="1" stop-color="#2f6fc0" /></linearGradient>
          <linearGradient id="mb" x1="1" y1="0" x2="0" y2="1"><stop offset="0" stop-color="#3fb878" /><stop offset=".55" stop-color="#5cc060" /><stop offset="1" stop-color="#f2e53a" /></linearGradient>
        </defs>
        <path d="M41 1C25-1 6 6 1 20c-3 8 2 14 10 13 7 0 12-4 14-9 1-4-2-6-6-5-3 1-5 3-5 5 3-1 5-1 5 1-1 3-5 4-8 3-4-2-3-8 1-12C18 10 29 4 41 1z" fill="url(#ma)" />
        <path d="M29 14c6-1 11 0 12 4 2 8-5 17-15 20-6 2-12 2-18 2 6-1 8-3 10-5 4-1 8-3 11-7 4-5 5-10 0-14z" fill="url(#mb)" />
      </svg>
      <div class="mt"><b>极光下载站</b><span>www.xz7.com</span></div>
    </div>
  </div>
</template>

<style>
html,
body {
  margin: 0;
  overflow: hidden;
}
</style>

<style scoped>
.app {
  position: relative;
  display: flex;
  flex-direction: column;
  height: 100vh;
  box-sizing: border-box;
  padding-left: 2px;
  border-bottom: 1px solid #1f2d38;
  background: linear-gradient(#c6c7ca 245px, #454550 245px, #454550 285px, #c6c7ca 285px) 0 0 / 2px 100% no-repeat, #f5f6f9;
  color: #232a3b;
  font: 12px/16px "Noto Sans", "Noto Sans CJK SC", sans-serif;
}
.app * { box-sizing: border-box; }
button, input, select {
  margin: 0;
  padding: 0;
  border: 0;
  background: none;
  color: inherit;
  font: inherit;
  outline: 0;
}
button { display: flex; align-items: center; white-space: nowrap; }
.car { margin-left: 2px; color: #76829c; }
.car.far { margin-left: 5px; }
.vline { flex: none; width: 1px; height: 20px; background: #dddfe4; }

/* document tabs */
.doctabs { display: flex; flex: none; height: 7px; padding-left: 3px; gap: 3px; background: #e4e5e9; }
.home { width: 69px; background: #5d8cf7; }
.doc { width: 125px; padding-left: 11px; background: #d8d9de; }
.doc.d2 { width: 250px; padding-left: 9px; }
.doc.cur { width: 250px; padding-left: 10px; background: #fff; }
.doc i { display: block; width: 16px; height: 1px; }
.red { background: #f5222d; }
.blue { background: #1f7cf5; }
.green { background: #21ba7b; }

/* menu bar */
.menubar { display: flex; flex: none; align-items: center; height: 37px; padding: 0 6px 0 16px; background: #fff; }
.file { gap: 6px; width: 55px; height: 24px; border-right: 1px solid #dddfe4; }
.quick { display: flex; align-items: center; height: 24px; width: 181px; padding-left: 4px; border-right: 1px solid #dddfe4; }
.q { justify-content: center; width: 25px; height: 20px; }
.q.off { color: #a9adb5; }
.qmore { width: 26px; }
.tabs { display: flex; align-items: center; }
.start { height: 20px; margin: 0 3px 0 6px; padding: 0 10px; border-radius: 10px; background: #21ba7b; color: #fff; font-weight: 700; }
.mtab { padding: 0 13px; }
.find { display: flex; align-items: center; gap: 1px; margin-left: 15px; color: #7a869f; }
.find input { width: 130px; height: 20px; }
.find input::placeholder { color: #7a869f; opacity: 1; }
.account { display: flex; align-items: center; gap: 11px; margin-left: auto; }
.account button { gap: 4px; }
.account svg { color: #55607a; }
.account .vline { margin-left: -2px; }
.account .dots { width: 11px; justify-content: center; margin-right: 3px; }

/* ribbon */
.ribbon { display: flex; flex: none; height: 65px; background: #fff; box-shadow: 0 1px 4px rgba(30, 40, 60, .14); position: relative; z-index: 5; }
.group { position: relative; display: flex; flex: none; justify-content: space-between; height: 62px; padding: 0 5px 0 4px; border-right: 1px solid #eaebee; }
.big { flex-direction: column; height: 50px; margin-top: 3px; padding: 0 6px; }
.pic { display: flex; align-items: center; justify-content: center; height: 31px; }
.lab { display: flex; align-items: center; height: 17px; }
.off { color: #a3a6ac; }
.stack { display: flex; flex-direction: column; gap: 1px; padding-top: 3px; }
.small { height: 25px; }
.sp { display: flex; width: 20px; }
.corner { position: absolute; right: 5px; bottom: 0; color: #7d879b; }
.line { display: flex; align-items: center; height: 25px; }
.tool { height: 20px; }
.letter { width: 25px; justify-content: center; }
.wide { margin-left: 5px; }
.combo { position: relative; height: 25px; border: 1px solid #e0e2e7; border-radius: 2px; color: #83868d; }
.combo select { width: 100%; height: 100%; padding-left: 2px; appearance: none; }
.combo .car { position: absolute; right: 3px; top: 10px; }
.fam { width: 139px; }
.size { width: 71px; margin-left: -1px; }
.num { width: 138px; }
.g-clip { width: 167px; padding-left: 7px; padding-right: 4px; }
.g-font { width: 280px; }
.g-font .stack, .g-num .stack { padding-left: 1px; }
.grow { margin: 0 8px; }
.paints { display: grid; grid-template-columns: repeat(5, 34px); margin-left: 4px; }
.g-align { width: 270px; padding-right: 4px; }
.aligns { display: grid; grid-template-columns: repeat(5, 25px); grid-auto-rows: 25px; align-items: center; align-content: start; gap: 1px 0; padding: 3px 0 0 6px; }
.g-num { width: 217px; }
.nums { justify-content: space-between; width: 125px; margin-left: 6px; }
.g-style { width: 176px; padding-left: 5px; justify-content: flex-start; }
.cond { position: relative; flex: none; }
.big.open { width: 67px; padding: 0; background: #dde1e6; }
.styl { padding-left: 5px; }
.g-edit { width: 188px; padding-right: 6px; }
.g-cells { width: 178px; }
.g-freeze, .g-tools { width: 79px; }
.g-find { width: 99px; }

/* popup menus */
.popup { position: absolute; z-index: 10; margin: 0; padding: 1px 1px 0; border: 1px solid #c5c8cd; background: #fff; box-shadow: 2px 2px 5px rgba(0, 0, 0, .18); list-style: none; }
.rules { left: 0; top: 54px; width: 195px; height: 245px; }
.highlight { left: 192px; top: 55px; width: 148px; height: 236px; padding-top: 2px; }
.entry button { width: 100%; height: 28px; padding-left: 8px; }
.entry button:disabled { color: #a3a6ac; }
.hot { background: #e6e9ee; }
.mi { width: 25px; }
.arr { margin-left: auto; margin-right: 7px; color: #76829c; }
.rule { height: 1px; margin: 4px 0; background: #dfe1e5; }
.mouse { position: absolute; left: 108px; top: 125px; color: #20242e; }

/* formula bar */
.work { display: flex; flex: 1; min-height: 0; }
.book { display: flex; flex: 1; flex-direction: column; min-width: 0; border-right: 2px solid #e2e3ea; }
.fbar { display: flex; flex: none; align-items: center; height: 44px; padding: 4px 1px 0 8px; }
.namebox { display: flex; align-items: center; width: 149px; height: 24px; padding-right: 2px; border: 1px solid #d5d8de; border-radius: 2px; background: #fff; }
.namebox input { flex: 1; min-width: 0; text-align: center; font: 16px/20px "Liberation Serif", "Noto Sans CJK SC", serif; }
.lens { margin-left: 46px; color: #4a5570; }
.fx { margin-left: 10px; width: 23px; color: #a3a6ac; font: italic 18px/20px "Liberation Serif", serif; }
.formula { flex: 1; min-width: 0; height: 24px; padding-left: 12px; border: 1px solid #d5d8de; border-radius: 2px; background: #fff; color: #000; font: 15px/20px "Liberation Serif", "Noto Sans CJK SC", serif; }

/* grid: the last column runs on beyond the visible area */
.sheet { display: flex; flex: 1; min-height: 0; }
.grid { position: relative; flex: 1; min-width: 0; overflow: hidden; background: #fff; }
table { width: calc(100% + 30px); table-layout: fixed; border-spacing: 0; }
.c-row { width: 34px; }
.c-A { width: 69px; }
.c-E { width: 115px; }
.c-F { width: 128px; }
.c-H { width: 113px; }
.c-I { width: 184px; }
.c-J, .c-K { width: 127px; }
.c-L { width: 152px; }
.c-M { width: 294px; }
.c-N { width: 269px; }
th, td { position: relative; padding: 0; text-align: center; }
th { font: 15px/18px "Noto Sans CJK SC", sans-serif; background: #f5f6f9; }
thead th { height: 19px; font: 14px/17px "Noto Sans", sans-serif; border-bottom: 1px solid #a9b4cb; background: linear-gradient(#eef0f5, #b4bdd0) 100% 0 / 1px 100% no-repeat, #f5f6f9; }
thead th.gap::after { content: ""; position: absolute; right: -4px; top: 0; width: 1px; height: 18px; background: linear-gradient(#eef0f5, #b4bdd0); }
thead th.sel { border-bottom-color: #21ba7b; box-shadow: inset 0 -1px #21ba7b; color: #21ba7b; background: #d1d4dc; }
thead th.all { background: linear-gradient(135deg, transparent 50%, #b9bdc6 50%) 19px 5px / 11px 11px no-repeat, #f5f6f9; }
tbody th { border-right: 1px solid #a9b4cb; background: linear-gradient(90deg, #f5f6f9, #c0c8d9) 0 100% / 100% 1px no-repeat, #f5f6f9; }
tbody th.sel { border-right: 2px solid #21ba7b; color: #21ba7b; background: #d1d4dc; }
td { padding-bottom: 2px; border-right: 1px solid #c0c7d8; border-bottom: 1px solid #c0c7d8; color: #000; font-size: 14px; }
td.bk, td.title { border-bottom-color: #000; }
td.bk { border-right-color: #000; }
td.title { font-size: 21px; font-weight: 700; line-height: 28px; }
.head td { font-weight: 700; font-size: 15px; }
.r1 { height: 38px; }
.rd { height: 30px; }
.rt { height: 40px; }
.rs { height: 31px; }
.note { position: absolute; right: 0; top: 0; border: 3px solid transparent; border-top-color: #f00; border-right-color: #f00; }
.cursor { position: absolute; z-index: 2; inset: -2px; border: 3px solid #21ba7b; }
.cursor::after { content: ""; position: absolute; right: -5px; bottom: -5px; width: 7px; height: 7px; border: 1px solid #fff; background: #21ba7b; }
.chart { position: absolute; left: 457px; top: 19px; }
.ct { font-size: 18px; fill: #595959; }
.cl { font-size: 12px; fill: #595959; }

.vscroll { display: flex; flex: none; flex-direction: column; align-items: center; width: 17px; border-left: 1px solid #dfe1e6; }
.split { width: 10px; height: 3px; margin: 5px 0 6px; border-top: 1px solid #7d89a2; border-bottom: 1px solid #7d89a2; }
.vtrack { display: flex; flex: 1; flex-direction: column; align-items: center; width: 14px; padding: 7px 0 7px; background: #e8e9ee; color: #8893ac; }
.vthumb { width: 12px; height: 343px; margin-top: 10px; border-radius: 6px; background: #d2d5dc; }
.vtrack .end { margin-top: auto; }

/* sheet tabs */
.tabrow { display: flex; flex: none; align-items: center; height: 22px; border-top: 1px solid #e2e3e8; }
.navs { display: flex; gap: 17px; width: 119px; padding-left: 16px; color: #9da1aa; }
.stab { height: 21px; padding: 0 16px; background: #e4e5eb; color: #42495a; }
.navs + .stab { padding-left: 18px; }
.stab.on { background: #fff; color: #21ba7b; font-weight: 700; }
.newtab { margin-left: 6px; }
.hscroll { display: flex; flex: 1; align-items: center; justify-content: flex-end; gap: 7px; padding-right: 23px; }
.hsplit { width: 3px; height: 10px; border-left: 1px solid #7d89a2; border-right: 1px solid #7d89a2; }
.htrack { display: flex; align-items: center; width: 670px; height: 14px; padding: 0 7px; background: #e8e9ee; color: #6c7894; }
.hthumb { width: 260px; height: 12px; margin-left: 10px; border-radius: 6px; background: #d2d5dc; }
.htrack .end { margin-left: auto; }

/* side bar */
.side { display: flex; flex: none; flex-direction: column; align-items: center; width: 34px; padding-left: 8px; color: #2c3448; }
.grip { width: 20px; height: 4px; margin: 11px 0; border-top: 1px solid #c4c7cd; border-bottom: 1px solid #c4c7cd; }
.side button { justify-content: center; height: 36px; }
.side .dim { color: #929bae; }
.side .mid { color: #55607a; }
.side .dotsbtn { width: 34px; margin: auto 0 0 -8px; padding: 0 0 0 8px; border-top: 1px solid #e2e3e8; height: 43px; padding-top: 6px; }

/* status bar */
.status { display: flex; flex: none; align-items: center; height: 28px; padding: 0 7px 0 16px; border-top: 1px solid #e2e3e8; }
.js { width: 31px; }
.pay { gap: 3px; margin-left: 9px; }
.pc { margin-left: 5px; color: #6c7894; }
.sum { margin-left: 17px; }
.status .vline { height: 14px; }
.views { display: flex; align-items: center; margin-left: auto; }
.crossb { margin: 0 14px 0 6px; }
.vb { justify-content: center; width: 24px; height: 24px; }
.vb.on { margin-left: 10px; background: #d6dbe2; }
.vb + .vb { margin-left: 2px; }
.vb + .vline { margin-left: 10px; }
.pct { margin-left: 10px; }
.minus { margin: 0 12px 0 11px; }
.views input { width: 148px; height: 14px; margin-right: 2px; appearance: none; background: linear-gradient(90deg, #3a4359 46%, #d9dbe1 46%) 0 50% / 100% 1px no-repeat; }
.views input::-webkit-slider-thumb { appearance: none; width: 12px; height: 12px; border: 1px solid #3a4359; border-radius: 50%; background: #f5f6f9; }
.full { margin-left: 13px; }

/* site badge */
.mark { position: absolute; z-index: 20; right: 7px; bottom: 6px; display: flex; align-items: flex-start; gap: 3px; opacity: .78; pointer-events: none; }
.mt { display: flex; flex-direction: column; gap: 2px; }
.mt b { color: #3a80d0; font: 700 21px/22px "Noto Sans CJK SC", sans-serif; }
.mt span { color: #3fb56a; font: 700 17px/18px "Liberation Sans", sans-serif; }
</style>
